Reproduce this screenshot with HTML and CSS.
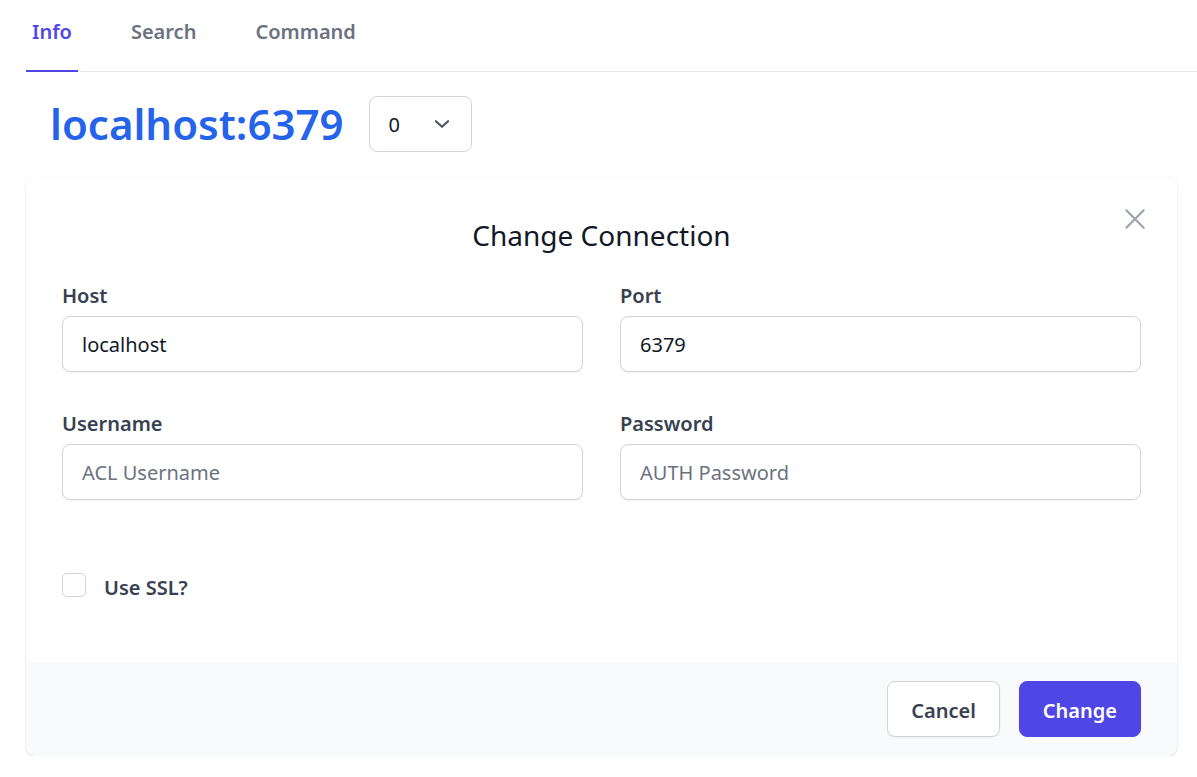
FILE: index.html
```html
<!DOCTYPE html>
<html lang="en">
<head>
<meta charset="utf-8">
<title>Redis</title>
<link rel="stylesheet" href="styles.css">
</head>
<body>
<div class="page">
  <nav class="tabs">
    <a class="tab active">Info</a>
    <a class="tab">Search</a>
    <a class="tab">Command</a>
  </nav>
  <div class="content">
    <div class="server-row">
      <h1 class="server">localhost:6379</h1>
      <div class="db-select">
        <span>0</span>
        <svg class="chev" viewBox="0 0 20 20" width="22" height="22"><path d="M4.5 7.5l5.5 5 5.5-5" fill="none" stroke="currentColor" stroke-width="2" stroke-linecap="round" stroke-linejoin="round"/></svg>
      </div>
    </div>
    <div class="card">
      <div class="card-body">
        <button class="close" aria-label="Close">
          <svg viewBox="0 0 24 24" width="26" height="26"><path d="M4 4l16 16M20 4L4 20" fill="none" stroke="currentColor" stroke-width="2" stroke-linecap="round"/></svg>
        </button>
        <h2 class="title">Change Connection</h2>
        <div class="grid">
          <div class="field">
            <label class="label">Host</label>
            <input class="input" value="localhost">
          </div>
          <div class="field">
            <label class="label">Port</label>
            <input class="input" value="6379">
          </div>
          <div class="field">
            <label class="label">Username</label>
            <input class="input" placeholder="ACL Username">
          </div>
          <div class="field">
            <label class="label">Password</label>
            <input class="input" placeholder="AUTH Password">
          </div>
        </div>
        <label class="check">
          <span class="box"></span>
          <span class="check-label">Use SSL?</span>
        </label>
      </div>
      <div class="card-footer">
        <button class="btn btn-cancel">Cancel</button>
        <button class="btn btn-primary">Change</button>
      </div>
    </div>
  </div>
</div>
</body>
</html>
```
FILE: styles.css
```css
* { box-sizing: border-box; }
html, body { margin: 0; padding: 0; background: #fff; }
body {
  font-family: "Noto Sans", "Open Sans", "Liberation Sans", sans-serif;
  color: #111827;
}
.page { padding-left: 26px; }
.tabs {
  display: flex;
  gap: 47px;
  height: 72px;
  border-bottom: 1px solid #e5e7eb;
}
.tab {
  display: block;
  padding: 18px 6px 0;
  font-size: 20px;
  font-weight: 600;
  line-height: 28px;
  color: #6b7280;
  height: 72px;
  border-bottom: 2px solid transparent;
}
.tab.active { color: #4f46e5; border-bottom-color: #4f46e5; }
.content { padding-right: 20px; }
.server-row {
  display: flex;
  align-items: flex-start;
  gap: 25px;
  padding: 24px 0 0 24px;
  height: 105px;
}
.server {
  margin: 0;
  font-size: 42px;
  font-weight: 600;
  line-height: 56px;
  color: #2563eb;
}
.db-select {
  width: 103px;
  height: 56px;
  border: 1px solid #d1d5db;
  border-radius: 8px;
  display: flex;
  align-items: center;
  justify-content: space-between;
  padding: 0 18px 0 19px;
  font-size: 20px;
  color: #111827;
}
.chev { color: #4b5563; }
.card {
  border-radius: 10px;
  box-shadow: 0 1px 3px rgba(0,0,0,0.1), 0 1px 2px rgba(0,0,0,0.06);
  overflow: hidden;
  background: #fff;
}
.card-body {
  position: relative;
  padding: 40px 36px 0;
  height: 485px;
}
.close {
  position: absolute;
  top: 29px;
  right: 29px;
  border: 0;
  background: none;
  padding: 0;
  color: #9ca3af;
  display: flex;
}
.title {
  margin: 0 0 29px;
  text-align: center;
  font-size: 28px;
  font-weight: 400;
  line-height: 36px;
  color: #111827;
}
.grid {
  display: grid;
  grid-template-columns: 1fr 1fr;
  column-gap: 37px;
  row-gap: 38px;
}
.field { display: flex; flex-direction: column; gap: 6px; }
.label {
  font-size: 20px;
  font-weight: 600;
  line-height: 28px;
  color: #374151;
}
.input {
  height: 56px;
  border: 1px solid #d1d5db;
  border-radius: 8px;
  box-shadow: 0 1px 2px rgba(0,0,0,0.05);
  padding: 0 19px;
  font-family: inherit;
  font-size: 20px;
  color: #111827;
  outline: none;
}
.input::placeholder { color: #6b7280; }
.check {
  display: flex;
  align-items: center;
  gap: 18px;
  margin-top: 68px;
}
.box {
  width: 24px;
  height: 24px;
  border: 1px solid #d1d5db;
  border-radius: 5px;
  background: #fff;
}
.check-label {
  font-size: 20px;
  font-weight: 600;
  line-height: 28px;
  color: #374151;
  margin-top: 6px;
}
.card-footer {
  background: #f9fafb;
  display: flex;
  justify-content: flex-end;
  gap: 19px;
  padding: 19px 36px;
}
.btn {
  height: 56px;
  border-radius: 8px;
  font-family: inherit;
  font-size: 20px;
  font-weight: 600;
  padding: 0 23px;
  cursor: pointer;
  line-height: 1;
  padding-top: 3px;
}
.btn-cancel {
  background: #fff;
  border: 1px solid #d1d5db;
  color: #374151;
  box-shadow: 0 1px 2px rgba(0,0,0,0.05);
}
.btn-primary {
  background: #4f46e5;
  border: 1px solid #4f46e5;
  color: #fff;
}
```
